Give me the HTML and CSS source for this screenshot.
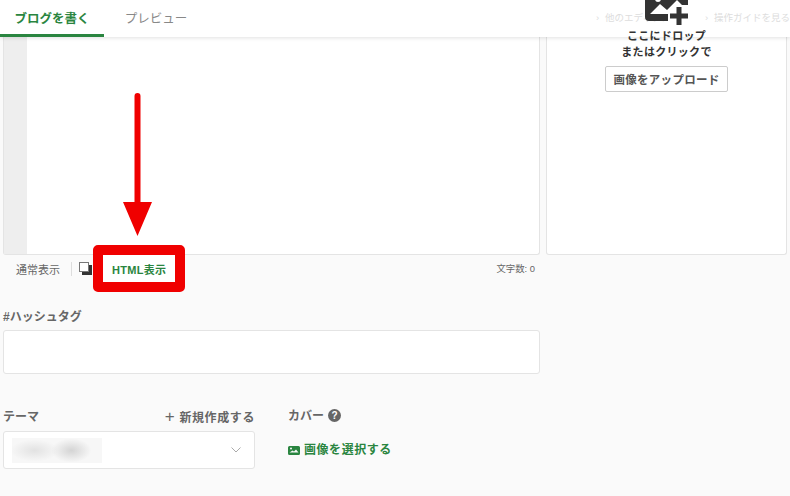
FILE: index.html
```html
<!DOCTYPE html>
<html lang="ja">
<head>
  <meta charset="UTF-8" />
  <title>ブログを書く</title>
  <link rel="stylesheet" href="styles.css">
</head>
<body>
  <header class="topbar">
    <nav class="tabs">
      <a class="tab active">ブログを書く</a>
      <a class="tab">プレビュー</a>
    </nav>
    <div class="guide-links">
      <a>他のエディタにする</a>
      <a>操作ガイドを見る</a>
    </div>
  </header>

  <main class="page">
    <section class="editor-row">
      <div class="editor">
        <div class="gutter"></div>
      </div>
      <aside class="drop-panel">
        <svg class="drop-icon" width="48" height="33" viewBox="0 0 48 33">
          <path fill="#333" d="M5 0h35a4 4 0 0 1 4 4v14H26v10H5a4 4 0 0 1-4-4V4a4 4 0 0 1 4-4z"/>
          <circle cx="14" cy="6" r="3" fill="#fff"/>
          <path fill="#fff" d="M6 21l10-10 7 6L33 7l5 5h10v21H24V21z"/>
          <path fill="#333" d="M32.500 14h5v6.500H44v5h-6.500V32h-5v-6.500H26v-5h6.500z"/>
        </svg>
        <p class="drop-text">ここにドロップ<br>またはクリックで</p>
        <button class="upload-btn">画像をアップロード</button>
      </aside>
    </section>

    <div class="editor-foot">
      <span class="mode">通常表示</span>
      <span class="mode-sep"></span>
      <span class="mode-icon"></span>
      <span class="mode current">HTML表示</span>
      <span class="count">文字数: 0</span>
    </div>

    <section class="field tags">
      <h3 class="label">#ハッシュタグ</h3>
      <div class="tag-input"></div>
    </section>

    <section class="bottom-row">
      <div class="theme">
        <div class="theme-head">
          <h3 class="label">テーマ</h3>
          <a class="new-link"><span class="plus">+</span>新規作成する</a>
        </div>
        <div class="theme-select">
          <span class="blurred"></span>
          <svg width="10" height="6" viewBox="0 0 10 6"><path d="M.5.5L5 5 9.500.5" fill="none" stroke="#aaa" stroke-width="1"/></svg>
        </div>
      </div>
      <div class="cover">
        <h3 class="label">カバー<span class="help">?</span></h3>
        <a class="cover-link">
          <svg width="12" height="9" viewBox="0 0 12 9"><path fill="#2a8540" fill-rule="evenodd" d="M1.500 0h9A1.500 1.500 0 0 1 12 1.500v6A1.500 1.500 0 0 1 10.500 9h-9A1.500 1.500 0 0 1 0 7.500v-6A1.500 1.500 0 0 1 1.500 0zm0 6.500h9L8 3.500 6 5.500 4.500 4.500zM3 1.500a1 1 0 1 0 0 2 1 1 0 0 0 0-2z"/></svg>
          画像を選択する
        </a>
      </div>
    </section>
  </main>

  <!-- annotation drawn on top of the screenshot -->
  <svg class="arrow" width="30" height="144" viewBox="0 0 30 144">
    <path fill="#f00000" d="M11.500 3a3 3 0 0 1 6 0v106H29l-14.500 34L0 109h11.500z"/>
  </svg>
  <div class="red-box"></div>
</body>
</html>
```

FILE: styles.css
```css
* {
  box-sizing: border-box;
}

html, body {
  height: 100%;
}

body {
  margin: 0;
  background: #fafafa;
  color: #333;
  font-family: "Liberation Sans", "Noto Sans CJK JP", sans-serif;
  overflow: hidden;
  position: relative;
}

.topbar {
  position: absolute;
  top: 0;
  left: 0;
  right: 0;
  height: 37px;
  background: #fff;
  box-shadow: 0 1px 4px rgba(0, 0, 0, 0.12);
  display: flex;
  justify-content: space-between;
  z-index: 1;
}

.tabs {
  display: flex;
}

.tab {
  width: 104px;
  height: 37px;
  padding-top: 10px;
  font-size: 12.500px;
  line-height: 18px;
  text-align: center;
  color: #888;
}

.tab.active {
  color: #2a8540;
  font-weight: bold;
  border-bottom: 3px solid #2a8540;
}

.guide-links {
  display: flex;
  gap: 15px;
  padding-top: 11px;
  font-size: 9.500px;
  line-height: 14px;
  color: #ddd;
}

.guide-links a::before {
  content: "›";
  display: inline-block;
  width: 9px;
}

.page {
  padding: 0 3px;
}

.editor-row {
  display: flex;
  gap: 6px;
  height: 255px;
}

.editor {
  width: 537px;
  background: #fff;
  border: 1px solid #e4e4e4;
  border-top: none;
  border-radius: 0 0 3px 3px;
}

.gutter {
  width: 23px;
  height: 100%;
  background: #eee;
}

.drop-panel {
  width: 241px;
  background: #fff;
  border: 1px solid #e4e4e4;
  border-top: none;
  border-radius: 0 0 3px 3px;
  display: flex;
  flex-direction: column;
  align-items: center;
  padding-top: 28px;
  position: relative;
}

.drop-icon {
  position: absolute;
  top: -7px;
  left: 97px;
  z-index: 2;
}

.drop-text {
  margin: 0;
  font-size: 11px;
  font-weight: bold;
  line-height: 16px;
  letter-spacing: 0.3px;
  text-align: center;
  color: #333;
  position: relative;
  z-index: 2;
}

.upload-btn {
  margin-top: 6px;
  width: 123px;
  height: 26px;
  padding: 0;
  background: #fff;
  border: 1px solid #ccc;
  border-radius: 2px;
  font: bold 11.500px "Liberation Sans", "Noto Sans CJK JP", sans-serif;
  letter-spacing: 0.3px;
  color: #555;
}

.editor-foot {
  display: flex;
  align-items: center;
  width: 537px;
  height: 27px;
  padding-left: 13px;
  font-size: 11px;
  color: #666;
}

.mode-sep {
  width: 1px;
  height: 14px;
  margin: 0 7px 0 11px;
  background: #ddd;
}

.mode-icon {
  width: 10px;
  height: 10px;
  background: #fff;
  border: 1px solid #777;
  box-shadow: 3px 3px 0 #333;
  margin-top: -4px;
}

.mode.current {
  margin-left: 23px;
  color: #2a8540;
  font-weight: bold;
  letter-spacing: 0.3px;
  position: relative;
  z-index: 1;
}

.count {
  margin-left: auto;
  margin-right: 5px;
  margin-top: -2px;
  font-size: 9.400px;
}

.field.tags {
  margin-top: 27px;
}

.label {
  margin: 0;
  font-size: 12px;
  line-height: 17px;
  font-weight: bold;
  color: #666;
}

.tag-input {
  width: 537px;
  height: 44px;
  margin-top: 4px;
  background: #fff;
  border: 1px solid #e4e4e4;
  border-radius: 3px;
}

.bottom-row {
  display: flex;
  gap: 33px;
  margin-top: 34px;
}

.theme {
  width: 252px;
}

.theme-head {
  display: flex;
  justify-content: space-between;
  align-items: center;
  height: 18px;
}

.new-link {
  font-size: 12px;
  line-height: 17px;
  font-weight: bold;
  letter-spacing: 0.6px;
  color: #666;
}

.plus {
  font-size: 17px;
  font-weight: normal;
  line-height: 17px;
  margin-right: 4px;
}

.theme-select {
  display: flex;
  justify-content: space-between;
  align-items: center;
  height: 38px;
  margin-top: 5px;
  padding: 0 13px 0 8px;
  background: #fff;
  border: 1px solid #e4e4e4;
  border-radius: 3px;
}

.blurred {
  width: 90px;
  height: 25px;
  background: radial-gradient(ellipse 20px 12px at 66% 50%, #d4d4d4, transparent),
    radial-gradient(ellipse 24px 11px at 25% 50%, #e2e2e2, transparent),
    #f7f7f7;
}

.help {
  display: inline-block;
  width: 13px;
  height: 13px;
  margin-left: 4px;
  background: #666;
  border-radius: 50%;
  color: #fff;
  font-size: 10px;
  line-height: 13px;
  text-align: center;
  vertical-align: 1px;
}

.cover-link {
  display: flex;
  align-items: center;
  gap: 4px;
  margin-top: 17px;
  font-size: 12px;
  line-height: 17px;
  font-weight: bold;
  letter-spacing: 0.55px;
  color: #2a8540;
}

.arrow {
  position: absolute;
  left: 123px;
  top: 93px;
  z-index: 3;
}

.red-box {
  position: absolute;
  left: 93px;
  top: 245px;
  width: 92px;
  height: 47px;
  background: #fff;
  border: 10px solid #f00000;
  border-radius: 5px;
}
```
